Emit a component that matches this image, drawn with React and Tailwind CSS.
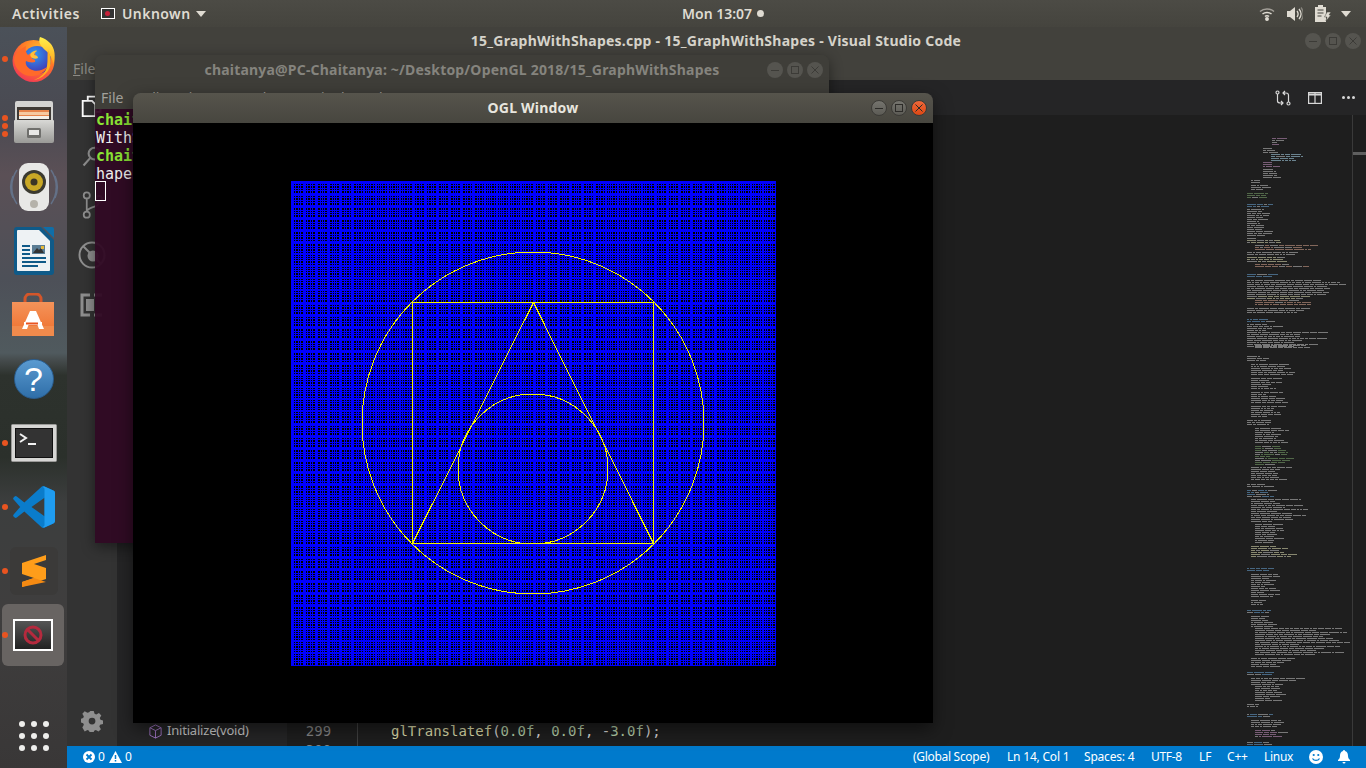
import React from "react";

const ui = "font-['Noto_Sans',sans-serif]";
const mono = "font-['DejaVu_Sans_Mono',monospace]";

function Pip({ top }) {
  return <span className="absolute left-[2px] w-[6px] h-[6px] rounded-full bg-[#e95420]" style={{ top }} />;
}

function Firefox() {
  return (
    <svg width="46" height="46" viewBox="0 0 46 46">
      <defs>
        <radialGradient id="ff1" cx="65%" cy="25%" r="85%">
          <stop offset="0" stopColor="#ffbd2e" />
          <stop offset=".5" stopColor="#ff7a26" />
          <stop offset="1" stopColor="#f0325a" />
        </radialGradient>
        <radialGradient id="ff2" cx="40%" cy="30%" r="80%">
          <stop offset="0" stopColor="#2f9cf2" />
          <stop offset=".6" stopColor="#3d55c8" />
          <stop offset="1" stopColor="#4a2aa0" />
        </radialGradient>
        <linearGradient id="ff3" x1="0" y1="0" x2="0" y2="1">
          <stop offset="0" stopColor="#fff04a" />
          <stop offset="1" stopColor="#ffa41c" />
        </linearGradient>
      </defs>
      <circle cx="22.500" cy="25" r="21" fill="url(#ff1)" />
      <circle cx="26" cy="24" r="14" fill="url(#ff2)" />
      <path d="M29 1c-2 5 0 8 5 13 5 4 8 9 8 15 3-8 2-17-3-22-3-3-6-5-10-6Z" fill="url(#ff3)" />
      <path d="M37 14c3 6 4 13 1 19-3 6-9 10-15 11 8-3 12-8 13-14 1-6 0-11 1-16Z" fill="#ffb01f" />
      <path d="M3 24c1 10 10 17 19 16 7-1 12-4 14-9-5 4-12 5-17 2-3-2-5-5-4-8 2 1 6 2 9 1 1-2-1-3-3-3 0-2 2-3 4-5-3-2-6-1-8 1-2-2-3-5-2-9-6 3-12 8-12 14Z" fill="#ff6a2a" />
      <path d="M20 17c2-2 5-3 6-2-2 1-3 3-3 4 2 0 4 1 4 3-2 1-5 1-7-1-1-1-1-3 0-4Z" fill="#ffc13a" />
    </svg>
  );
}

function FilesIcon() {
  return (
    <svg width="44" height="46" viewBox="0 0 44 46">
      <defs>
        <linearGradient id="fi1" x1="0" y1="0" x2="0" y2="1">
          <stop offset="0" stopColor="#d9d9d6" />
          <stop offset="1" stopColor="#9a9a97" />
        </linearGradient>
      </defs>
      <path d="M3 3a2 2 0 0 1 2-2h34a2 2 0 0 1 2 2v18H3Z" fill="#d4d4d2" />
      <rect x="5" y="7" width="34" height="14" fill="#3f3a36" />
      <rect x="7" y="10" width="30" height="9" fill="#e8844a" />
      <rect x="7" y="12" width="30" height="3" fill="#f6c9a0" />
      <rect x="7" y="16" width="30" height="3" fill="#f4f0e8" />
      <path d="M3 20h38a1 1 0 0 1 1 1v20a2 2 0 0 1-2 2H4a2 2 0 0 1-2-2V21a1 1 0 0 1 1-1Z" fill="url(#fi1)" />
      <rect x="15" y="28" width="14" height="10" rx="1.500" fill="#6f6f6c" />
      <rect x="17" y="30" width="10" height="5" fill="#e8e8e6" />
    </svg>
  );
}

function Rhythmbox() {
  return (
    <svg width="50" height="50" viewBox="0 0 50 50">
      <path d="M8 8C1 18 1 32 8 42M4 14c-3 7-3 15 0 22M42 8c7 10 7 24 0 34M46 14c3 7 3 15 0 22" stroke="#6e8db0" strokeOpacity=".55" strokeWidth="1.500" fill="none" />
      <rect x="10" y="1" width="30" height="48" rx="9" fill="#e8e8e6" />
      <circle cx="25" cy="20" r="12" fill="#3b3a30" />
      <circle cx="25" cy="20" r="9" fill="#c9a825" />
      <circle cx="25" cy="20" r="3.500" fill="#3a3526" />
      <circle cx="25" cy="42" r="4" fill="#b5b2aa" />
    </svg>
  );
}

function Writer() {
  return (
    <svg width="40" height="48" viewBox="0 0 40 48">
      <path d="M3 0h24l13 13v32a3 3 0 0 1-3 3H3a3 3 0 0 1-3-3V3a3 3 0 0 1 3-3Z" fill="#0f5a88" />
      <path d="M4 3h21l11 11v29a1 1 0 0 1-1 1H4a1 1 0 0 1-1-1V4a1 1 0 0 1 1-1Z" fill="#eef2f4" />
      <path d="M29 0h9a2 2 0 0 1 2 2v9Z" fill="#0f6ea8" />
      <rect x="18" y="18" width="13" height="9" fill="#5b7d94" />
      <path d="M19 26l4-5 2 2 2-2 3 5Z" fill="#333" />
      <rect x="27" y="19" width="3" height="3" fill="#e6b93a" />
      <path d="M8 18h8v2H8Zm0 4h8v2H8Zm0 4h8v2H8Zm0 4h24v2H8Zm0 4h24v2H8Zm0 4h16v2H8Z" fill="#0f5a88" />
    </svg>
  );
}

function Software() {
  return (
    <svg width="44" height="44" viewBox="0 0 44 44" className="mr-[1px]">
      <defs>
        <linearGradient id="sw1" x1="0" y1="0" x2="0" y2="1">
          <stop offset="0" stopColor="#f4935a" />
          <stop offset="1" stopColor="#ee6f2c" />
        </linearGradient>
      </defs>
      <path d="M14 13V6a5 5 0 0 1 5-5h6a5 5 0 0 1 5 5v7" stroke="#d4562a" strokeWidth="3" fill="none" />
      <path d="M1 9h42v34H1Z" fill="url(#sw1)" />
      <path d="M1 33h42v10H1Z" fill="#f08a4c" />
      <path d="M19 18h6l8 18h-5l-1.500-4h-9L16 36h-5Z" fill="#fff" />
      <rect x="13" y="29" width="18" height="3" fill="#fff" />
      <rect x="15" y="29.500" width="12" height="2" fill="#e95420" />
    </svg>
  );
}

function Help() {
  return (
    <div className="w-10 h-10 rounded-full bg-[linear-gradient(180deg,#5a9ad0,#2f6ea8)] border border-[#2a5d8f] flex items-center justify-center text-white text-[34px] leading-none font-['Liberation_Sans',sans-serif]">?</div>
  );
}

function TerminalIcon() {
  return (
    <svg width="46" height="38" viewBox="0 0 46 38">
      <rect x=".5" y=".5" width="45" height="37" rx="1" fill="#d6d6d4" stroke="#9a9a98" />
      <rect x="4" y="4" width="38" height="30" fill="#111" />
      <rect x="5" y="5" width="36" height="28" fill="#333" />
      <path d="M9 10l6 4-6 4" stroke="#f2f2f2" strokeWidth="2" fill="none" />
      <rect x="17" y="19" width="8" height="2" fill="#f2f2f2" />
    </svg>
  );
}

function VSCode({ size = 42 }) {
  return (
    <svg width={size} height={size} viewBox="0 0 100 100">
      <path d="M96 11 75 1a6 6 0 0 0-7 1L27 39 9 25a4 4 0 0 0-5 0l-2 2a4 4 0 0 0 0 6l15 17L2 67a4 4 0 0 0 0 6l2 2a4 4 0 0 0 5 0l18-14 41 37a6 6 0 0 0 7 1l21-10a6 6 0 0 0 4-6V17a6 6 0 0 0-4-6ZM75 72 44 50l31-22Z" fill="#0a7ccb" />
      <path d="M71 1.500 75 1l21 10a6 6 0 0 1 4 6v66a6 6 0 0 1-4 6L75 99l-4-1 4-4V6Z" fill="#1f9cf0" />
    </svg>
  );
}

function Sublime() {
  return (
    <div className="w-12 h-12 rounded-md bg-[#3b3a39] flex items-center justify-center">
      <svg width="24" height="32" viewBox="0 0 24 32">
        <path d="M24 0 0 8v11l12 4-12 4v5l24-8V13L12 9l12-4Z" fill="#ff9d1a" />
        <path d="M0 19l24 8-24 5v-5l12-4Z" fill="#f58a12" />
      </svg>
    </div>
  );
}

function AppTile() {
  return (
    <div className="w-[62px] h-[62px] mr-[1px] rounded-md bg-[#686462] flex items-center justify-center">
      <div className="w-10 h-8 border-2 border-white bg-[linear-gradient(180deg,#555,#222)] flex items-center justify-center">
        <svg width="20" height="20" viewBox="0 0 20 20">
          <circle cx="10" cy="10" r="8" fill="none" stroke="#b52a3e" strokeWidth="3" />
          <path d="M4.500 4.500l11 11" stroke="#b52a3e" strokeWidth="3" />
        </svg>
      </div>
    </div>
  );
}

function Dock() {
  const slots = [
    [<Firefox />, [29]],
    [<FilesIcon />, [24, 32, 40]],
    [<Rhythmbox />, []],
    [<Writer />, []],
    [<Software />, []],
    [<Help />, []],
    [<TerminalIcon />, [29]],
    [<VSCode />, [29]],
    [<Sublime />, [29]],
    [<AppTile />, [29]],
  ];
  return (
    <div className="w-[67px] shrink-0 flex flex-col items-center bg-[linear-gradient(180deg,#4b5159_0%,#4a4a52_12%,#5b5056_20%,#4d5058_34%,#505a5e_44%,#454b4c_45%,#2d322d_47%,#2b302b_58%,#3c3e3e_64%,#3f3e3e_78%,#393737_100%)]">
      {slots.map(([icon, pips], i) => (
        <div key={i} className="relative w-full h-16 shrink-0 flex items-center justify-center">
          {icon}
          {pips.map((t) => <Pip key={t} top={t} />)}
        </div>
      ))}
      <div className="mt-auto mb-[17px] grid grid-cols-3 gap-x-[6px] gap-y-[6px]">
        {[0, 1, 2, 3, 4, 5, 6, 7, 8].map((d) => (
          <span key={d} className="w-[6px] h-[6px] rounded-full bg-[#eeeeec]" />
        ))}
      </div>
    </div>
  );
}

function WinBtn({ kind, active }) {
  const bg = active
    ? kind === "close"
      ? "bg-[linear-gradient(180deg,#f0683a,#dd4814)] border-[#3c3b37]"
      : "bg-[linear-gradient(180deg,#75746e,#5c5b55)] border-[#3c3b37]"
    : "bg-[#55544f] border-transparent";
  const c = active ? "#2c2b28" : "#3c3b37";
  return (
    <span className={`w-4 h-4 rounded-full border flex items-center justify-center ${bg}`}>
      <svg width="10" height="10" viewBox="0 0 10 10" fill="none" stroke={c} strokeWidth="1">
        {kind === "min" && <path d="M1 5.500h8" />}
        {kind === "max" && <rect x="1.500" y="1.500" width="7" height="7" />}
        {kind === "close" && <path d="M1.500 1.500l7 7M8.500 1.500l-7 7" />}
      </svg>
    </span>
  );
}

function WinBtns({ active }) {
  return (
    <div className="flex items-center gap-1">
      <WinBtn kind="min" active={active} />
      <WinBtn kind="max" active={active} />
      <WinBtn kind="close" active={active} />
    </div>
  );
}

function TopBar() {
  return (
    <div className="h-[27px] shrink-0 flex items-center relative bg-[linear-gradient(180deg,#4c4b45,#45443e)] text-[#dfdbd2] text-[14px] font-semibold">
      <span className="ml-3 tracking-[0.55px]">Activities</span>
      <span className="ml-[21px] w-[14px] h-[11px] border border-white bg-[#333] flex items-center justify-center">
        <span className="w-[5px] h-[5px] rounded-full bg-[#c8213a]" />
      </span>
      <span className="ml-[7px] tracking-[0.45px]">Unknown</span>
      <svg className="ml-[5px]" width="10" height="6" viewBox="0 0 10 6"><path d="M0 0h10L5 6Z" fill="#dfdbd2" /></svg>
      <span className="absolute left-[682px] flex items-center gap-[5px]">
        Mon 13:07
        <span className="w-[7px] h-[7px] rounded-full bg-[#dfdbd2]" />
      </span>
      <div className="ml-auto mr-[15px] flex items-center">
        <svg width="16" height="14" viewBox="0 0 16 14" fill="none" stroke="#dfdbd2" strokeWidth="1.500">
          <path d="M1 4.500c4-3.500 10-3.500 14 0" strokeOpacity=".6" />
          <path d="M3.500 7c2.500-2 6.500-2 9 0" />
          <path d="M6 9.500c1-1 3-1 4 0" />
          <circle cx="8" cy="12" r="1.200" fill="#dfdbd2" />
        </svg>
        <svg className="ml-[12px]" width="16" height="16" viewBox="0 0 16 16" fill="none">
          <path d="M0 5h3l5-4v14l-5-4H0Z" fill="#dfdbd2" />
          <path d="M10 5c1.500 2 1.500 4 0 6M12 3c2.500 3 2.500 7 0 10" stroke="#dfdbd2" strokeWidth="1.300" />
          <path d="M14 1.500c3 4 3 9 0 13" stroke="#dfdbd2" strokeOpacity=".4" strokeWidth="1.300" />
        </svg>
        <svg className="ml-[12px]" width="16" height="17" viewBox="0 0 16 17" fill="none">
          <path d="M3 0h5v2h3v15H0V2h3Z" fill="#dfdbd2" />
          <path d="M2.500 5h6M2.500 8h6M2.500 11h4" stroke="#45443e" strokeWidth="1.200" />
          <path d="M12 7l4 0-2 3h2l-5 6 1-4H9.500Z" fill="#dfdbd2" stroke="#45443e" strokeWidth=".5" />
        </svg>
        <svg className="ml-[10px]" width="10" height="6" viewBox="0 0 10 6"><path d="M0 0h10L5 6Z" fill="#dfdbd2" /></svg>
      </div>
    </div>
  );
}

function ActivityBar() {
  return (
    <div className="w-[50px] shrink-0 bg-[#333333] flex flex-col items-center relative">
      <svg className="mt-[15px]" width="24" height="22" viewBox="0 0 26 26" fill="none" stroke="#ffffff" strokeWidth="2.200">
        <path d="M8 6V2h9l6 6v12h-6" />
        <path d="M2 7h11l4 4v14H2Z" />
      </svg>
      <svg className="mt-[29px]" width="24" height="22" viewBox="0 0 24 26" fill="none" stroke="#8f8f8f" strokeWidth="2.500">
        <circle cx="15" cy="9" r="7" />
        <path d="M10 14 2 23" />
      </svg>
      <svg className="mt-[23px]" width="24" height="28" viewBox="0 0 24 32" fill="none" stroke="#8f8f8f" strokeWidth="2">
        <circle cx="6" cy="5" r="3.500" />
        <circle cx="6" cy="27" r="3.500" />
        <circle cx="20" cy="9" r="3.500" />
        <path d="M6 9v14M20 13c0 6-14 5-14 11" />
      </svg>
      <svg className="mt-[22px]" width="28" height="28" viewBox="0 0 28 28" fill="none" stroke="#8f8f8f" strokeWidth="2">
        <circle cx="14" cy="14" r="12.500" />
        <path d="M5 5l18 18" />
        <circle cx="15" cy="15" r="4.500" fill="#8f8f8f" />
      </svg>
      <svg className="mt-[24px]" width="24" height="24" viewBox="0 0 24 24" fill="none" stroke="#8f8f8f" strokeWidth="3">
        <path d="M10 2H2v20h8M14 2h8M14 22h8" />
        <rect x="6" y="6" width="8" height="12" fill="#8f8f8f" stroke="none" />
      </svg>
      <svg className="mt-auto mb-[14px]" width="22" height="22" viewBox="0 0 24 24" fill="#8f8f8f">
        <path d="M10 0h4l1 3.500 2 .8 3.200-1.800 2.800 2.800-1.800 3.200.8 2 3 1v4l-3.500 1-.8 2 1.800 3.200-2.800 2.800-3.200-1.800-2 .8-1 3.500h-4l-1-3.500-2-.8-3.200 1.800L.5 19.700l1.800-3.200-.8-2L-2 13.500v-4l3.500-1 .8-2L.5 3.300 3.300.5l3.200 1.800 2-.8ZM12 8a4 4 0 1 0 0 8 4 4 0 0 0 0-8Z" transform="translate(1 1) scale(.92)" />
      </svg>
    </div>
  );
}

function SymbolRow({ children, last }) {
  return (
    <div className={`flex items-center h-[22px] shrink-0 pl-[31px] ${last ? "mb-[-18px]" : ""}`}>
      <svg width="15" height="15" viewBox="0 0 16 16" fill="none" stroke="#a074c4" strokeWidth="1">
        <path d="M8 1l6 3v8l-6 3-6-3V4Z" />
        <path d="M2 4l6 3 6-3M8 7v8" />
      </svg>
      {children && <span className="ml-[4px] tracking-[-0.2px]">{children}</span>}
    </div>
  );
}

function Sidebar() {
  return (
    <div className="w-[170px] shrink-0 bg-[#252526] flex flex-col justify-end text-[13px] text-[#c8c8c8] overflow-hidden">
      <SymbolRow>Initialize(void)</SymbolRow>
      <SymbolRow last />
    </div>
  );
}

const PAL = {
  p: "#a97fa6",
  b: "#5d8fb8",
  g: "#6f9060",
  o: "#b98f7c",
  w: "#a8a8a8",
  y: "#c2c29c",
  l: "#93b9cc",
};

const BLOCKS = [
  [138, 4, 25, 4, 6, "p"], [148, 3, 16, 6, 14, "w"], [154, 4, 24, 20, 34, "l"], [162, 3, 16, 6, 12, "p"],
  [169, 5, 16, 6, 16, "w"], [180, 2, 4, 3, 5, "w"], [185, 3, 4, 8, 18, "w"], [193, 3, 0, 12, 22, "g"],
  [204, 2, 0, 20, 24, "b"], [209, 6, 0, 12, 22, "w"], [221, 8, 0, 8, 18, "w"], [238, 2, 0, 6, 8, "w"],
  [240, 2, 0, 30, 36, "y"], [245, 3, 8, 30, 60, "o"], [252, 2, 0, 40, 50, "w"], [257, 3, 0, 28, 40, "y"],
  [264, 2, 8, 30, 58, "o"], [274, 2, 0, 20, 24, "b"], [280, 8, 0, 70, 98, "w"], [296, 2, 0, 45, 60, "y"],
  [300, 3, 8, 30, 58, "o"], [308, 3, 0, 50, 70, "w"], [319, 2, 0, 20, 24, "b"], [324, 4, 0, 14, 34, "w"],
  [332, 8, 0, 40, 80, "w"], [345, 2, 8, 40, 62, "w"], [356, 3, 0, 12, 22, "w"], [364, 6, 4, 20, 46, "w"],
  [378, 6, 4, 14, 30, "w"], [392, 6, 4, 14, 34, "w"], [406, 6, 4, 14, 30, "w"], [420, 3, 0, 14, 22, "w"],
  [428, 8, 8, 18, 36, "w"], [446, 10, 8, 14, 36, "g"], [467, 7, 4, 18, 40, "w"], [484, 2, 0, 12, 20, "w"],
  [490, 4, 0, 20, 28, "b"], [499, 12, 4, 18, 54, "w"], [524, 10, 8, 14, 30, "w"], [546, 6, 4, 20, 44, "y"],
  [568, 2, 0, 18, 24, "b"], [574, 12, 4, 12, 26, "w"], [600, 3, 4, 8, 14, "w"], [610, 2, 0, 20, 30, "b"],
  [616, 6, 4, 10, 20, "w"], [628, 14, 8, 40, 98, "w"], [658, 5, 4, 18, 46, "w"], [672, 2, 0, 18, 24, "b"],
  [678, 4, 4, 20, 50, "w"], [686, 8, 8, 14, 30, "w"], [704, 2, 0, 6, 10, "w"], [714, 2, 0, 20, 26, "b"],
  [720, 4, 4, 14, 28, "w"], [730, 4, 8, 14, 26, "p"], [742, 2, 0, 18, 24, "b"],
];

function buildMinimap() {
  let s = 12345;
  const rnd = () => {
    s = (s * 1103515245 + 12345) & 0x7fffffff;
    return s / 0x7fffffff;
  };
  const out = [];
  BLOCKS.forEach(([y, n, ind, a, b, col]) => {
    for (let i = 0; i < n; i++) {
      const len = a + rnd() * (b - a);
      let x = ind;
      while (x < ind + len) {
        const w = 2 + Math.floor(rnd() * 9);
        const c = rnd() < 0.75 ? PAL[col] : PAL.w;
        out.push(<rect key={out.length} x={x} y={y - 115 + i * 2} width={w} height="1" fill={c} />);
        x += w + 1;
      }
    }
  });
  return out;
}

function Editor() {
  const rects = React.useMemo(buildMinimap, []);
  return (
    <div className="flex-1 min-w-0 flex flex-col bg-[#1e1e1e]">
      <div className="h-[35px] shrink-0 bg-[#252526] flex items-center justify-end pr-[11px] gap-[15px]">
        <svg width="16" height="16" viewBox="0 0 16 16" fill="none" stroke="#d8d8d8" strokeWidth="1.200">
          <circle cx="2.500" cy="2.500" r="1.500" /><circle cx="13.500" cy="13.500" r="1.500" />
          <path d="M2.500 4v7c0 2 2 2 3 2h2M6 11l2 2-2 2M13.500 12V5c0-2-2-2-3-2H8M10 1 8 3l2 2" />
        </svg>
        <svg className="ml-[2px]" width="14" height="12" viewBox="0 0 14 12" fill="none" stroke="#d8d8d8" strokeWidth="1.200">
          <rect x=".6" y=".6" width="12.800" height="10.800" /><path d="M.6 2.500h12.800" strokeWidth="2" /><path d="M7 1v10" />
        </svg>
        <svg className="ml-[5px]" width="13" height="3" viewBox="0 0 13 3" fill="#d8d8d8">
          <circle cx="1.500" cy="1.500" r="1.500" /><circle cx="6.500" cy="1.500" r="1.500" /><circle cx="11.500" cy="1.500" r="1.500" />
        </svg>
      </div>
      <div className="flex-1 min-h-0 flex">
        <div className="w-[71px] shrink-0 flex flex-col justify-end items-center border-r border-[#404040] overflow-hidden">
          <div className={`${mono} text-[14px] leading-[19px] text-[#858585] mr-[7px]`}>299</div>
          <div className={`${mono} text-[14px] leading-[19px] text-[#858585] mb-[-14px] mr-[7px]`}>300</div>
        </div>
        <div className="flex-1 min-w-0 flex flex-col justify-end">
          <div className={`${mono} text-[14px] leading-[19px] text-[#d4d4d4] pl-[33px] mb-[5px] whitespace-pre`}>
            <span className="text-[#dcdcaa]">glTranslatef</span>(<span className="text-[#b5cea8]">0.0f</span>, <span className="text-[#b5cea8]">0.0f</span>, -<span className="text-[#b5cea8]">3.0f</span>);
          </div>
        </div>
        <div className="w-[105px] shrink-0">
          <svg width="105" height="631" viewBox="0 0 105 631" opacity=".65" shapeRendering="crispEdges">{rects}</svg>
        </div>
        <div className="w-[14px] shrink-0 border-l border-[#3a3a3a] relative">
          <div className="absolute left-0 right-0 top-[37px] h-[3px] bg-[#5f5f5f]" />
        </div>
      </div>
    </div>
  );
}

function StatusBar() {
  return (
    <div className="h-[22px] shrink-0 bg-[#007acc] flex items-center text-white text-[12px] pl-[16px] pr-[16px]">
      <svg width="12" height="12" viewBox="0 0 12 12">
        <circle cx="6" cy="6" r="6" fill="#fff" />
        <path d="M3.500 3.500l5 5M8.500 3.500l-5 5" stroke="#007acc" strokeWidth="1.800" />
      </svg>
      <span className="ml-[3px]">0</span>
      <svg className="ml-[4px]" width="13" height="12" viewBox="0 0 13 12">
        <path d="M6.500 0 13 12H0Z" fill="#fff" />
        <path d="M6.500 4v4M6.500 9v1.500" stroke="#007acc" strokeWidth="1.500" />
      </svg>
      <span className="ml-[3px]">0</span>
      <div className="ml-auto flex items-center">
        <span className="w-[78px] whitespace-nowrap tracking-[-0.3px]">(Global Scope)</span>
        <span className="ml-[16px] w-[61px] whitespace-nowrap tracking-[-0.2px]">Ln 14, Col 1</span>
        <span className="ml-[16px] w-[51px] whitespace-nowrap tracking-[-0.2px]">Spaces: 4</span>
        <span className="ml-[16px] w-[32px] whitespace-nowrap tracking-[-0.3px]">UTF-8</span>
        <span className="ml-[16px] w-[12px]">LF</span>
        <span className="ml-[16px] w-[22px] tracking-[-0.2px]">C++</span>
        <span className="ml-[15px] w-[30px] tracking-[-0.3px]">Linux</span>
        <svg className="ml-[15px]" width="14" height="14" viewBox="0 0 14 14">
          <circle cx="7" cy="7" r="7" fill="#fff" />
          <circle cx="4.700" cy="5" r="1.100" fill="#007acc" /><circle cx="9.300" cy="5" r="1.100" fill="#007acc" />
          <path d="M3.500 8.500c1.500 2.500 5.500 2.500 7 0" stroke="#007acc" strokeWidth="1.300" fill="none" />
        </svg>
        <svg className="ml-[15px]" width="12" height="14" viewBox="0 0 12 14" fill="#fff">
          <path d="M6 0a1 1 0 0 1 1 1c2.500.5 3 3 3 5 0 2 1 3 2 4v1H0v-1c1-1 2-2 2-4 0-2 .5-4.500 3-5a1 1 0 0 1 1-1ZM4.500 12h3a1.500 1.500 0 0 1-3 0Z" />
        </svg>
      </div>
    </div>
  );
}

function VSWindow() {
  return (
    <div className="flex-1 min-w-0 flex flex-col">
      <div className="h-[29px] shrink-0 bg-[#42413c] flex items-center justify-center relative">
        <span className="font-bold text-[14px] text-[#d6d3ca] ml-[-1px] mt-[-2px] tracking-[0.25px]">15_GraphWithShapes.cpp - 15_GraphWithShapes - Visual Studio Code</span>
        <div className="absolute right-[5px] top-[6px]"><WinBtns /></div>
      </div>
      <div className="h-[24px] shrink-0 bg-[#42413c] flex items-center pl-[6px] text-[14px] text-[#8c8b85]">
        <span><span className="underline">F</span>ile</span>
      </div>
      <div className="flex-1 min-h-0 flex">
        <ActivityBar />
        <Sidebar />
        <Editor />
      </div>
      <StatusBar />
    </div>
  );
}

function TerminalWindow() {
  return (
    <div className="absolute left-[95px] top-[55px] w-[734px] h-[488px] flex flex-col rounded-t-[8px] overflow-hidden shadow-[0_4px_14px_rgba(0,0,0,.45)]">
      <div className="h-[32px] shrink-0 bg-[#3f3e39] flex items-center justify-center relative">
        <span className="font-bold text-[14px] text-[#85847e] mt-[-4px] tracking-[0.19px]">chaitanya@PC-Chaitanya: ~/Desktop/OpenGL 2018/15_GraphWithShapes</span>
        <div className="absolute right-[6px] top-[7px]"><WinBtns /></div>
      </div>
      <div className="h-[22px] shrink-0 bg-[#3f3e39] flex items-center gap-[16px] pl-[6px] text-[14px] text-[#a3a29c]">
        <span className="mt-[-2px]">File</span><span className="mt-[-2px]">Edit</span><span className="mt-[-2px]">View</span><span className="mt-[-2px]">Search</span><span className="mt-[-2px]">Terminal</span><span className="mt-[-2px]">Help</span>
      </div>
      <div className={`flex-1 bg-[#300a24]/95 pl-[1px] pt-[2px] text-[15px] leading-[18px] text-[#eeeeec] ${mono}`}>
        <div className="font-bold text-[#8ae234] whitespace-nowrap">chaitanya@PC-Chaitanya</div>
        <div className="whitespace-nowrap">WithShapes.cpp</div>
        <div className="font-bold text-[#8ae234] whitespace-nowrap">chaitanya@PC-Chaitanya</div>
        <div className="whitespace-nowrap">hapes</div>
        <div className="w-[11px] h-[20px] ml-[-1px] mt-[-2px] border border-white" />
      </div>
    </div>
  );
}

function GraphCanvas() {
  const set = new Set();
  for (let i = 0; i <= 200; i++) {
    const p = Math.floor(i * 2.42);
    set.add(p);
    if (i % 5 === 0 && p < 484) set.add(p + 1);
  }
  const ticks = [...set];
  return (
    <svg width="485" height="485" viewBox="0 0 485 485" shapeRendering="crispEdges">
      <g fill="#0000ff">
        {ticks.map((t) => <rect key={`v${t}`} x={t} y="0" width="1" height="485" />)}
        {ticks.map((t) => <rect key={`h${t}`} x="0" y={t} width="485" height="1" />)}
      </g>
      <g stroke="#f4f400" strokeWidth="1" fill="none">
        <circle cx="242" cy="242" r="171" />
        <rect x="121.500" y="121.500" width="241" height="241" />
        <path d="M242.500 121.500 121.500 362.500M242.500 121.500 362.500 362.500" />
        <circle cx="242" cy="288" r="75" />
      </g>
    </svg>
  );
}

function OGLWindow() {
  return (
    <div className="absolute left-[133px] top-[93px] w-[800px] h-[630px] flex flex-col rounded-t-[8px] overflow-hidden shadow-[0_6px_18px_rgba(0,0,0,.5)]">
      <div className="h-[30px] shrink-0 bg-[linear-gradient(180deg,#56544c,#47463f)] flex items-center justify-center relative">
        <span className="font-bold text-[14px] text-[#e8e6df] mt-[-2px] tracking-[0.2px]">OGL Window</span>
        <div className="absolute right-[6px] top-[7px]"><WinBtns active /></div>
      </div>
      <div className="flex-1 bg-black flex items-center justify-center">
        <GraphCanvas />
      </div>
    </div>
  );
}

export default function App() {
  return (
    <div className={`relative w-[1366px] h-[768px] overflow-hidden flex flex-col bg-[#1e1e1e] ${ui}`}>
      <TopBar />
      <div className="flex-1 min-h-0 flex">
        <Dock />
        <VSWindow />
      </div>
      <TerminalWindow />
      <OGLWindow />
    </div>
  );
}
